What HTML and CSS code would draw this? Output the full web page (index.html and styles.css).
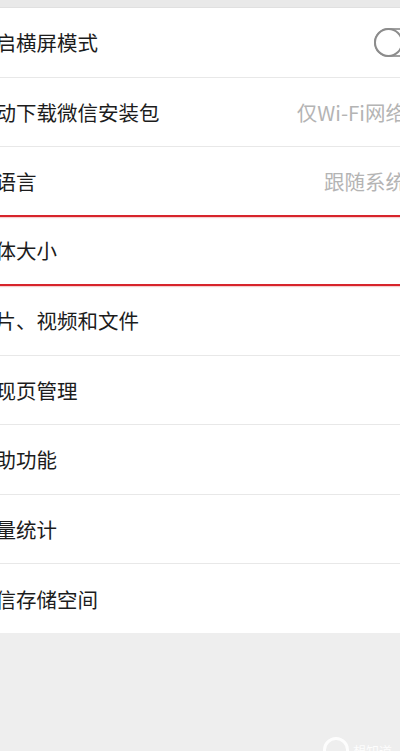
FILE: index.html
```html
<!DOCTYPE html>
<html lang="zh-CN">
<head>
<meta charset="UTF-8">
<meta name="viewport" content="width=device-width, initial-scale=1.0">
<title>通用</title>
<link rel="stylesheet" href="styles.css">
</head>
<body>
<div class="pagina">
    <div class="franja"></div>
    <ul class="lista">
        <li class="fila">
            <span class="etiqueta">开启横屏模式</span>
            <span class="interruptor"><span class="perilla"></span></span>
        </li>
        <li class="fila">
            <span class="etiqueta">自动下载微信安装包</span>
            <span class="valor">仅Wi-Fi网络</span>
        </li>
        <li class="fila antes-marca">
            <span class="etiqueta">多语言</span>
            <span class="valor">跟随系统</span>
        </li>
        <li class="fila marcada">
            <span class="etiqueta">字体大小</span>
        </li>
        <li class="fila">
            <span class="etiqueta">照片、视频和文件</span>
        </li>
        <li class="fila">
            <span class="etiqueta">发现页管理</span>
        </li>
        <li class="fila">
            <span class="etiqueta">辅助功能</span>
        </li>
        <li class="fila">
            <span class="etiqueta">流量统计</span>
        </li>
        <li class="fila ultima">
            <span class="etiqueta">微信存储空间</span>
        </li>
    </ul>
    <div class="marca-agua">
        <span class="logo"></span>
        <span class="texto-marca">想知道</span>
    </div>
</div>
</body>
</html>
```

FILE: styles.css
```css
body {
    margin: 0;
    background-color: #eeeeee;
    font-family: "Noto Sans CJK SC", "Noto Sans", sans-serif;
    overflow: hidden;
}
.pagina {
    position: relative;
    height: 751px;
}
.franja {
    height: 7px;
    background: #e9e9e9;
    border-bottom: 1px solid #e0e0e0;
}
.lista {
    list-style: none;
    margin: 0;
    padding: 0;
    background: white;
}
.fila {
    display: flex;
    align-items: center;
    justify-content: space-between;
    height: 68.5px;
    border-bottom: 1px solid #e8e8e8;
    overflow: hidden;
}
.fila.ultima {
    border-bottom: none;
    height: 69px;
}
.antes-marca, .marcada {
    height: 67.5px;
    border-bottom: 2px solid #d7242b;
    box-shadow: 0 1px 1px rgba(230,120,120,0.35);
}
.etiqueta {
    margin-left: -25px;
    font-size: 20.5px;
    color: #1c1c1c;
    white-space: nowrap;
}
.valor {
    margin-right: -6px;
    font-size: 20.5px;
    color: #b4b4b4;
    white-space: nowrap;
}
.interruptor {
    display: flex;
    align-items: center;
    flex-shrink: 0;
    width: 56px;
    height: 25px;
    margin-right: -34px;
    border: 2px solid #a0a0a0;
    border-radius: 15px;
    background: white;
}
.perilla {
    flex-shrink: 0;
    width: 25px;
    height: 25px;
    border: 2px solid #8c8c8c;
    border-radius: 50%;
    margin-left: -2px;
    background: white;
}
.marca-agua {
    position: absolute;
    left: 323px;
    top: 737px;
    display: flex;
    align-items: center;
    gap: 4px;
    opacity: 0.9;
}
.logo {
    width: 20px;
    height: 20px;
    border: 3px solid white;
    border-radius: 50%;
}
.texto-marca {
    color: white;
    font-size: 13px;
}
```
